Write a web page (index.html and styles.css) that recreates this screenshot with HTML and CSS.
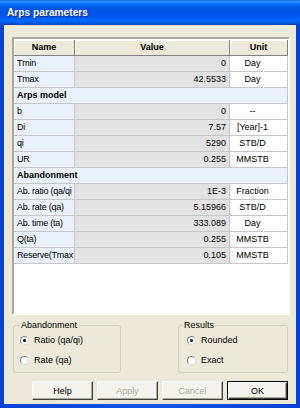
FILE: index.html
```html
<!DOCTYPE html>
<html lang="en">
<head>
  <meta charset="UTF-8" />
  <title>Arps parameters</title>
  <link rel="stylesheet" href="styles.css">
</head>
<body>
  <div class="window">
    <div class="titlebar"><span class="title">Arps parameters</span></div>
    <div class="client">
      <div class="grid-frame">
        <table class="grid">
          <thead>
            <tr><th class="col-name">Name</th><th class="col-value">Value</th><th class="col-unit">Unit</th></tr>
          </thead>
          <tbody>
            <tr><td class="name">Tmin</td><td class="value">0</td><td class="unit">Day</td></tr>
            <tr><td class="name">Tmax</td><td class="value">42.5533</td><td class="unit">Day</td></tr>
            <tr class="section"><td colspan="3">Arps model</td></tr>
            <tr><td class="name">b</td><td class="value">0</td><td class="unit">--</td></tr>
            <tr><td class="name">Di</td><td class="value">7.57</td><td class="unit">[Year]-1</td></tr>
            <tr><td class="name">qi</td><td class="value">5290</td><td class="unit">STB/D</td></tr>
            <tr><td class="name">UR</td><td class="value">0.255</td><td class="unit">MMSTB</td></tr>
            <tr class="section"><td colspan="3">Abandonment</td></tr>
            <tr><td class="name">Ab. ratio (qa/qi</td><td class="value">1E-3</td><td class="unit">Fraction</td></tr>
            <tr><td class="name">Ab. rate (qa)</td><td class="value">5.15966</td><td class="unit">STB/D</td></tr>
            <tr><td class="name">Ab. time (ta)</td><td class="value">333.089</td><td class="unit">Day</td></tr>
            <tr><td class="name">Q(ta)</td><td class="value">0.255</td><td class="unit">MMSTB</td></tr>
            <tr><td class="name">Reserve(Tmax</td><td class="value">0.105</td><td class="unit">MMSTB</td></tr>
          </tbody>
        </table>
      </div>

      <div class="groups">
        <fieldset class="group group-left">
          <legend>Abandonment</legend>
          <label class="radio"><span class="radio-box checked"><span class="dot"></span></span>Ratio (qa/qi)</label>
          <label class="radio"><span class="radio-box"></span>Rate (qa)</label>
        </fieldset>
        <fieldset class="group group-right">
          <legend>Results</legend>
          <label class="radio"><span class="radio-box checked"><span class="dot"></span></span>Rounded</label>
          <label class="radio"><span class="radio-box"></span>Exact</label>
        </fieldset>
      </div>

      <div class="buttons">
        <button type="button">Help</button>
        <button type="button" disabled>Apply</button>
        <button type="button" disabled>Cancel</button>
        <button type="button" class="btn-default">OK</button>
      </div>
    </div>
  </div>
</body>
</html>
```

FILE: styles.css
```css
* {
  box-sizing: border-box;
}
body {
  margin: 0;
  font-family: "Liberation Sans", Arial, sans-serif;
  font-size: 9px;
  color: #000;
  background: #fff;
}
.window {
  width: 300px;
  height: 408px;
  display: flex;
  flex-direction: column;
  background: linear-gradient(to right, #0843d6, #0a55e8 50%, #0843d6);
}
.titlebar {
  flex: none;
  height: 25px;
  display: flex;
  align-items: center;
  padding-left: 7px;
  background: linear-gradient(to bottom, #0058ee 0%, #3593ff 4%, #288eff 8%, #127dff 12%, #036ffc 16%, #0262ee 22%, #0057e5 30%, #0054e3 40%, #0055eb 60%, #005bf5 70%, #026afe 80%, #0062ef 88%, #0052d6 94%, #0040ab 100%);
}
.title {
  color: #fff;
  font-weight: bold;
  font-size: 10.2px;
  text-shadow: 1px 1px #0c2a88;
}
.client {
  flex: 1;
  margin: 0 4px 4px 4px;
  background: #ece9d8;
  display: flex;
  flex-direction: column;
  padding: 12px 6px 4px 8px;
}

/* property grid */
.grid-frame {
  height: 278px;
  background: #fff;
  border: 2px solid;
  border-color: #aca899 #fff #fff #aca899;
  padding-top: 1px;
  overflow: hidden;
}
.grid {
  border-collapse: separate;
  border-spacing: 0;
  table-layout: fixed;
  width: 274px;
}
.grid th,
.grid td {
  height: 16px;
  padding: 0 3px;
  border-right: 1px solid #c6c6c6;
  border-bottom: 1px solid #c6c6c6;
  overflow: hidden;
  white-space: nowrap;
  line-height: 15px;
}
.grid th {
  background: #ece9d8;
  font-weight: bold;
  text-align: center;
  border-color: #808080;
  box-shadow: inset 1px 1px #fff;
}
.col-name { width: 61px; }
.col-value { width: 155px; }
.col-unit { width: 58px; }
.grid td.name {
  background: #eaf1fc;
  padding-right: 0;
  letter-spacing: -0.25px;
}
.grid td.value {
  background: #e2e2e2;
  text-align: right;
}
.grid td.unit {
  background: #fff;
  text-align: center;
  padding: 0 12px 0 0;
}
.grid tr.section td {
  background: #eaf1fc;
  font-weight: bold;
}

/* option groups */
.groups {
  display: flex;
  justify-content: space-between;
  margin: 5px 2px 0 1px;
  height: 53px;
}
.group {
  margin: 0;
  padding: 0 0 0 6px;
  border: 1px solid #d0d0bf;
  border-radius: 3px;
  display: flex;
  flex-direction: column;
}
.group legend {
  padding: 0 1px;
  line-height: 10px;
  font-size: 9px;
}
.group-left { width: 108px; }
.group-right {
  width: 110px;
  padding-left: 8px;
}
.group-right legend {
  margin-left: -4px;
}
.radio {
  height: 20px;
  display: flex;
  align-items: center;
  gap: 5px;
}
.radio-box {
  width: 9px;
  height: 9px;
  border-radius: 50%;
  background: #fff;
  border: 1px solid;
  border-color: #808080 #dcdcdc #dcdcdc #808080;
  display: flex;
  align-items: center;
  justify-content: center;
}
.dot {
  width: 3px;
  height: 3px;
  border-radius: 50%;
  background: #000;
}

/* buttons */
.buttons {
  display: flex;
  gap: 4px;
  margin: 8px 0 0 20px;
}
button {
  width: 61px;
  height: 19px;
  padding: 0;
  font-family: "Liberation Sans", Arial, sans-serif;
  font-size: 9px;
  color: #000;
  background: #f3f2ec;
  border: 1px solid;
  border-color: #fff #404040 #404040 #fff;
  box-shadow: inset -1px -1px #aca899;
}
button:disabled {
  color: #aca899;
  text-shadow: 1px 1px #fff;
}
.btn-default {
  border: 1px solid #000;
  box-shadow: inset 1px 1px #fff, inset -1px -1px #404040, inset -2px -2px #aca899;
}
```
